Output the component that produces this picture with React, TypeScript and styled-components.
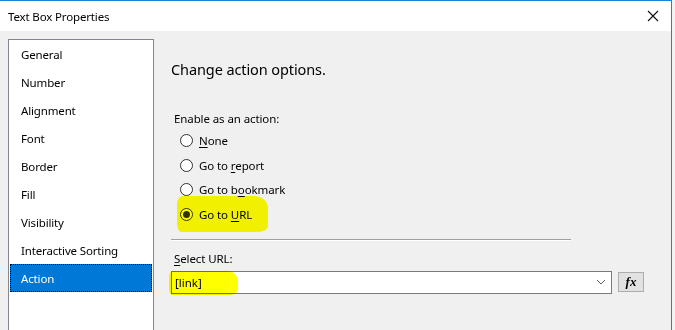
import React from "react";
import styled, { createGlobalStyle } from "styled-components";

const Global = createGlobalStyle`
  html, body { margin: 0; padding: 0; }
  body {
    width: 675px; height: 330px; overflow: hidden;
    background: #f3f3f3;
    font-family: "Noto Sans", "Open Sans", sans-serif;
    font-size: 12px; color: #000;
  }
`;

const Screen = styled.div`
  display: flex;
  width: 675px;
  height: 330px;
  overflow: hidden;
`;

const Window = styled.div`
  width: 672px;
  height: 330px;
  border-top: 1px solid #1883d7;
  border-right: 1px solid #1883d7;
  box-sizing: border-box;
  display: flex;
  flex-direction: column;
  background: #f0f0f0;
`;

const TitleBar = styled.div`
  height: 30px;
  background: #fff;
  display: flex;
  align-items: center;
  justify-content: space-between;
  padding: 0 12px 0 8px;
  flex-shrink: 0;
`;

const Title = styled.span`
  font-size: 11.5px;
  letter-spacing: -0.15px;
`;

const Body = styled.div`
  flex: 1;
  display: flex;
  padding: 8px 0 0 8px;
  gap: 17px;
`;

const NavList = styled.div`
  width: 146px;
  box-sizing: border-box;
  border: 1px solid #828790;
  border-bottom: none;
  background: #fff;
  padding: 0 0 0 1px;
  display: flex;
  flex-direction: column;
`;

const NavItem = styled.div<{ $active?: boolean }>`
  height: 28px;
  box-sizing: border-box;
  display: flex;
  align-items: center;
  padding-left: ${(p) => (p.$active ? 10 : 11)}px;
  font-size: 11.5px;
  letter-spacing: -0.15px;
  background: ${(p) => (p.$active ? "#0078d7" : "transparent")};
  color: ${(p) => (p.$active ? "#fff" : "#000")};
  border: ${(p) => (p.$active ? "1px dotted #000" : "none")};
  margin-right: ${(p) => (p.$active ? 1 : 0)}px;
`;

const Panel = styled.div`
  flex: 1;
  display: flex;
  flex-direction: column;
  padding-top: 20px;
`;

const Heading = styled.div`
  font-size: 14.5px;
  line-height: 20px;
  letter-spacing: -0.1px;
  margin-bottom: 32px;
`;

const Label = styled.div`
  font-size: 11.5px;
  line-height: 16px;
  padding-left: 3px;
  letter-spacing: -0.1px;
`;

const RadioGroup = styled.div`
  display: flex;
  flex-direction: column;
  margin-top: 1px;
  padding-left: 9px;
`;

const RadioRow = styled.div`
  height: 24.7px;
  display: flex;
  align-items: center;
`;

const Mark = styled.span<{ $on?: boolean }>`
  display: inline-flex;
  position: relative;
  align-items: center;
  gap: 6px;
  &::before {
    content: "";
    display: ${(p) => (p.$on ? "block" : "none")};
    position: absolute;
    left: -3px;
    right: -16px;
    top: -11px;
    bottom: -10px;
    background: #ffff00;
    border-radius: 6px 14px 10px 4px / 8px 12px 6px 10px;
    mix-blend-mode: multiply;
    z-index: 1;
  }
`;

const RadioCircle = styled.span<{ $checked?: boolean }>`
  width: 13px;
  height: 13px;
  box-sizing: border-box;
  border: 1px solid #333;
  border-radius: 50%;
  background: #fff;
  display: flex;
  align-items: center;
  justify-content: center;
  &::after {
    content: "";
    display: ${(p) => (p.$checked ? "block" : "none")};
    width: 7px;
    height: 7px;
    border-radius: 50%;
    background: #333;
  }
`;

const RadioText = styled.span`
  font-size: 11.5px;
  letter-spacing: -0.1px;
`;

const U = styled.span`
  text-decoration: underline;
  text-underline-offset: 2px;
`;

const Separator = styled.div`
  width: 400px;
  height: 1px;
  background: #a0a0a0;
  border-bottom: 1px solid #fff;
  margin: 12px 0 10px;
`;

const ComboRow = styled.div`
  display: flex;
  align-items: center;
  gap: 6px;
  margin-top: 4px;
`;

const Combo = styled.div`
  position: relative;
  width: 441px;
  height: 23px;
  box-sizing: border-box;
  border: 1px solid #7a7a7a;
  background: #fff;
  display: flex;
  align-items: center;
  justify-content: space-between;
  padding: 0 5px 0 3px;
  font-size: 11.5px;
`;

const LinkText = styled.span`
  position: relative;
  &::before {
    content: "";
    position: absolute;
    left: -6px;
    right: -36px;
    top: -4px;
    bottom: -5px;
    background: #ffff00;
    border-radius: 4px 10px 8px 3px / 6px 10px 6px 8px;
    mix-blend-mode: multiply;
  }
`;

const FxButton = styled.div`
  width: 26px;
  height: 20px;
  box-sizing: border-box;
  border: 1px solid #adadad;
  background: #e1e1e1;
  display: flex;
  align-items: center;
  justify-content: center;
  font-family: "Liberation Serif", "DejaVu Serif", serif;
  font-style: italic;
  font-weight: bold;
  font-size: 13px;
`;

export default function App() {
  const nav = [
    "General",
    "Number",
    "Alignment",
    "Font",
    "Border",
    "Fill",
    "Visibility",
    "Interactive Sorting",
    "Action",
  ];
  return (
    <Screen>
      <Global />
      <Window>
        <TitleBar>
          <Title>Text Box Properties</Title>
          <svg width="12" height="12" viewBox="0 0 12 12">
            <path d="M1 1 L11 11 M11 1 L1 11" stroke="#111" strokeWidth="1.1" />
          </svg>
        </TitleBar>
        <Body>
          <NavList>
            {nav.map((n) => (
              <NavItem key={n} $active={n === "Action"}>
                {n}
              </NavItem>
            ))}
          </NavList>
          <Panel>
            <Heading>Change action options.</Heading>
            <Label>Enable as an action:</Label>
            <RadioGroup>
              <RadioRow>
                <Mark>
                  <RadioCircle />
                  <RadioText>
                    <U>N</U>one
                  </RadioText>
                </Mark>
              </RadioRow>
              <RadioRow>
                <Mark>
                  <RadioCircle />
                  <RadioText>
                    Go to <U>r</U>eport
                  </RadioText>
                </Mark>
              </RadioRow>
              <RadioRow>
                <Mark>
                  <RadioCircle />
                  <RadioText>
                    Go to b<U>o</U>okmark
                  </RadioText>
                </Mark>
              </RadioRow>
              <RadioRow>
                <Mark $on>
                  <RadioCircle $checked />
                  <RadioText>
                    Go to <U>U</U>RL
                  </RadioText>
                </Mark>
              </RadioRow>
            </RadioGroup>
            <Separator />
            <Label>
              <U>S</U>elect URL:
            </Label>
            <ComboRow>
              <Combo>
                <LinkText>[link]</LinkText>
                <svg width="10" height="6" viewBox="0 0 10 6">
                  <path d="M1 1 L5 5 L9 1" fill="none" stroke="#606060" strokeWidth="1" />
                </svg>
              </Combo>
              <FxButton>fx</FxButton>
            </ComboRow>
          </Panel>
        </Body>
      </Window>
    </Screen>
  );
}
